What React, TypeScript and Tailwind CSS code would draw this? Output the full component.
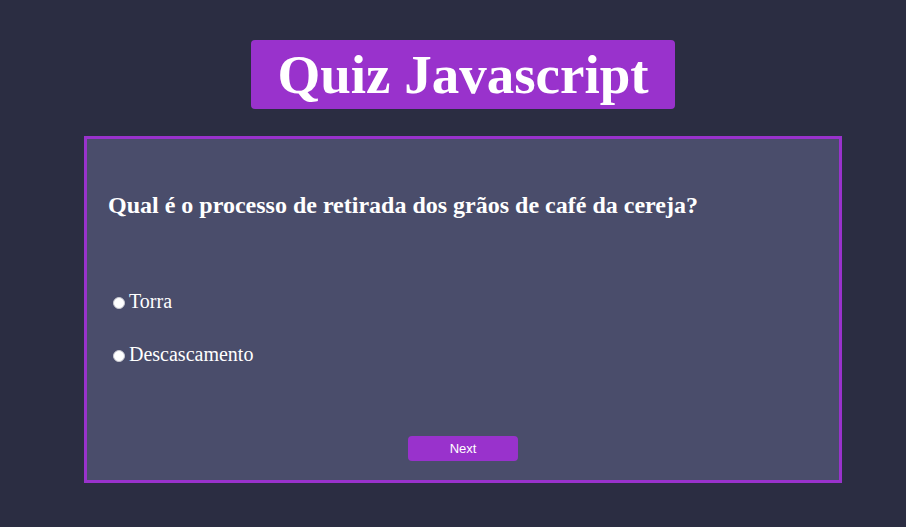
import React from "react";

export default function App() {
  return (
    <div className="min-h-[527px] w-full bg-[#2b2d42] flex flex-col items-center pl-[20px]">
      <div className="mt-[40px] h-[69px] w-[424px] rounded-[4px] bg-[#9932cc] flex items-center justify-center">
        <h1 className="font-['Liberation_Serif',serif] font-bold text-white text-[55px] leading-none">Quiz Javascript</h1>
      </div>
      <div className="mt-[27px] w-[758px] h-[347px] border-[3px] border-[#9932cc] bg-[#4a4d6b] flex flex-col">
        <h2 className="mt-[52px] ml-[21px] font-['Liberation_Serif',serif] font-bold text-white text-[24px] leading-[28px]">
          Qual é o processo de retirada dos grãos de café da cereja?
        </h2>
        <div className="mt-[71px] ml-[26px] flex flex-col gap-[30px] font-['Liberation_Serif',serif] text-white text-[20px] leading-[23px]">
          <label className="flex items-center">
            <span className="w-[12px] h-[12px] rounded-full bg-white border border-[#c8c8d0] mt-[3px]"></span>
            <span className="ml-[4px]">Torra</span>
          </label>
          <label className="flex items-center">
            <span className="w-[12px] h-[12px] rounded-full bg-white border border-[#c8c8d0] mt-[3px]"></span>
            <span className="ml-[4px]">Descascamento</span>
          </label>
        </div>
        <div className="mt-auto mb-[19px] flex justify-center">
          <button className="w-[110px] h-[25px] rounded-[4px] bg-[#9932cc] text-white text-[13px] font-['Liberation_Sans',sans-serif]">Next</button>
        </div>
      </div>
    </div>
  );
}
